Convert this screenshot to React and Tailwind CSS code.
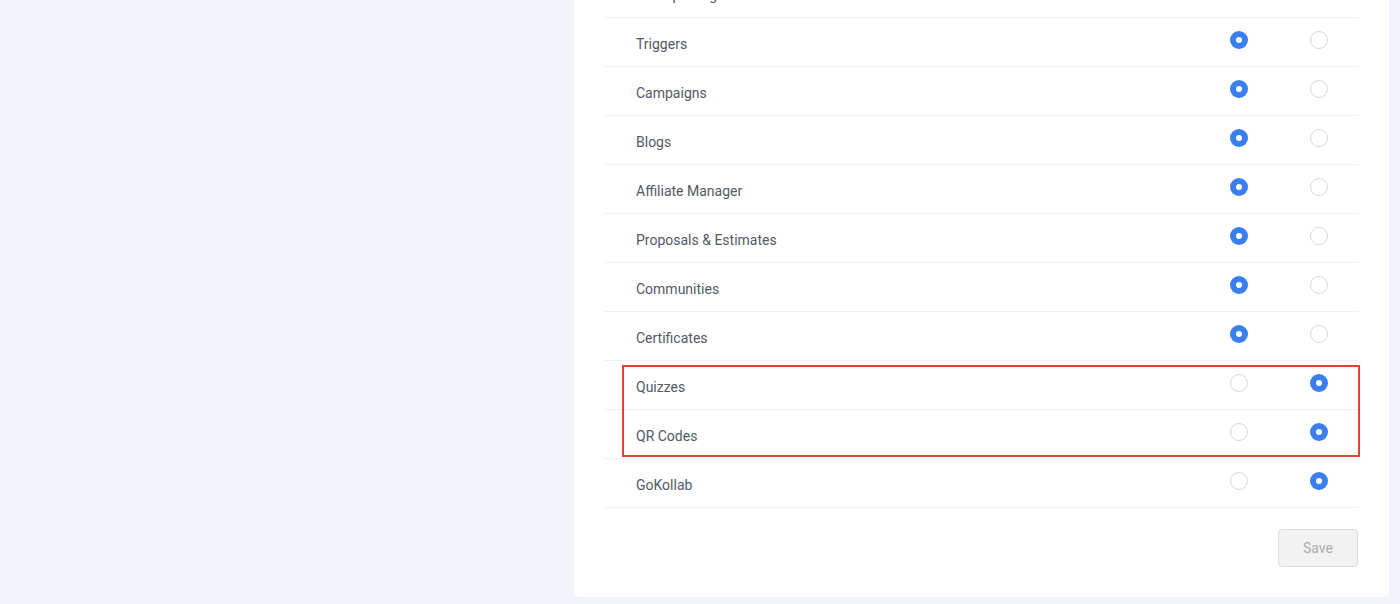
import React from "react";

const rowsTop = [
  ["Ad Reporting", true],
  ["Triggers", true],
  ["Campaigns", true],
  ["Blogs", true],
  ["Affiliate Manager", true],
  ["Proposals & Estimates", true],
  ["Communities", true],
  ["Certificates", true],
];
const rowsBox = [
  ["Quizzes", false],
  ["QR Codes", false],
];
const rowsBottom = [["GoKollab", false]];

function Radio({ on }) {
  return on ? (
    <span className="mt-[13px] flex h-[18px] w-[18px] items-center justify-center rounded-full bg-[#3a7ff0]">
      <span className="h-[6px] w-[6px] rounded-full bg-white" />
    </span>
  ) : (
    <span className="mt-[13px] block h-[18px] w-[18px] rounded-full border border-[#d3d9e2] bg-white" />
  );
}

function Row({ label, first }) {
  return (
    <div className="flex h-[49px] items-start border-b border-[#eef1f5]">
      <div className="mt-[16px] flex-1 pl-[32px] text-[14px] leading-[20px] text-[#525966]">{label}</div>
      <div className="flex w-[80px] justify-center">
        <Radio on={first} />
      </div>
      <div className="flex w-[80px] justify-center">
        <Radio on={!first} />
      </div>
    </div>
  );
}

export default function App() {
  return (
    <div
      className="h-[604px] w-[1400px] overflow-hidden bg-[#f1f4f8]"
      style={{ fontFamily: "Roboto, 'Noto Sans', 'Liberation Sans', sans-serif" }}
    >
      <div className="ml-[574px] w-[815px] rounded-b-md bg-white px-[30px] pb-[30px]">
        <div className="mt-[-31px]">
          {rowsTop.map(([l, f]) => (
            <Row key={l} label={l} first={f} />
          ))}
          <div className="relative">
            {rowsBox.map(([l, f]) => (
              <Row key={l} label={l} first={f} />
            ))}
            <div className="pointer-events-none absolute left-[18px] right-[-1px] top-[4px] h-[92px] border-2 border-[#e5432d]" />
          </div>
          {rowsBottom.map(([l, f]) => (
            <Row key={l} label={l} first={f} />
          ))}
        </div>
        <div className="flex justify-end pt-[21px] pr-[1px]">
          <button className="h-[38px] w-[80px] rounded-[4px] border border-[#dcdcdc] bg-[#f2f2f2] text-[14px] text-[#adadad]">
            Save
          </button>
        </div>
      </div>
    </div>
  );
}
